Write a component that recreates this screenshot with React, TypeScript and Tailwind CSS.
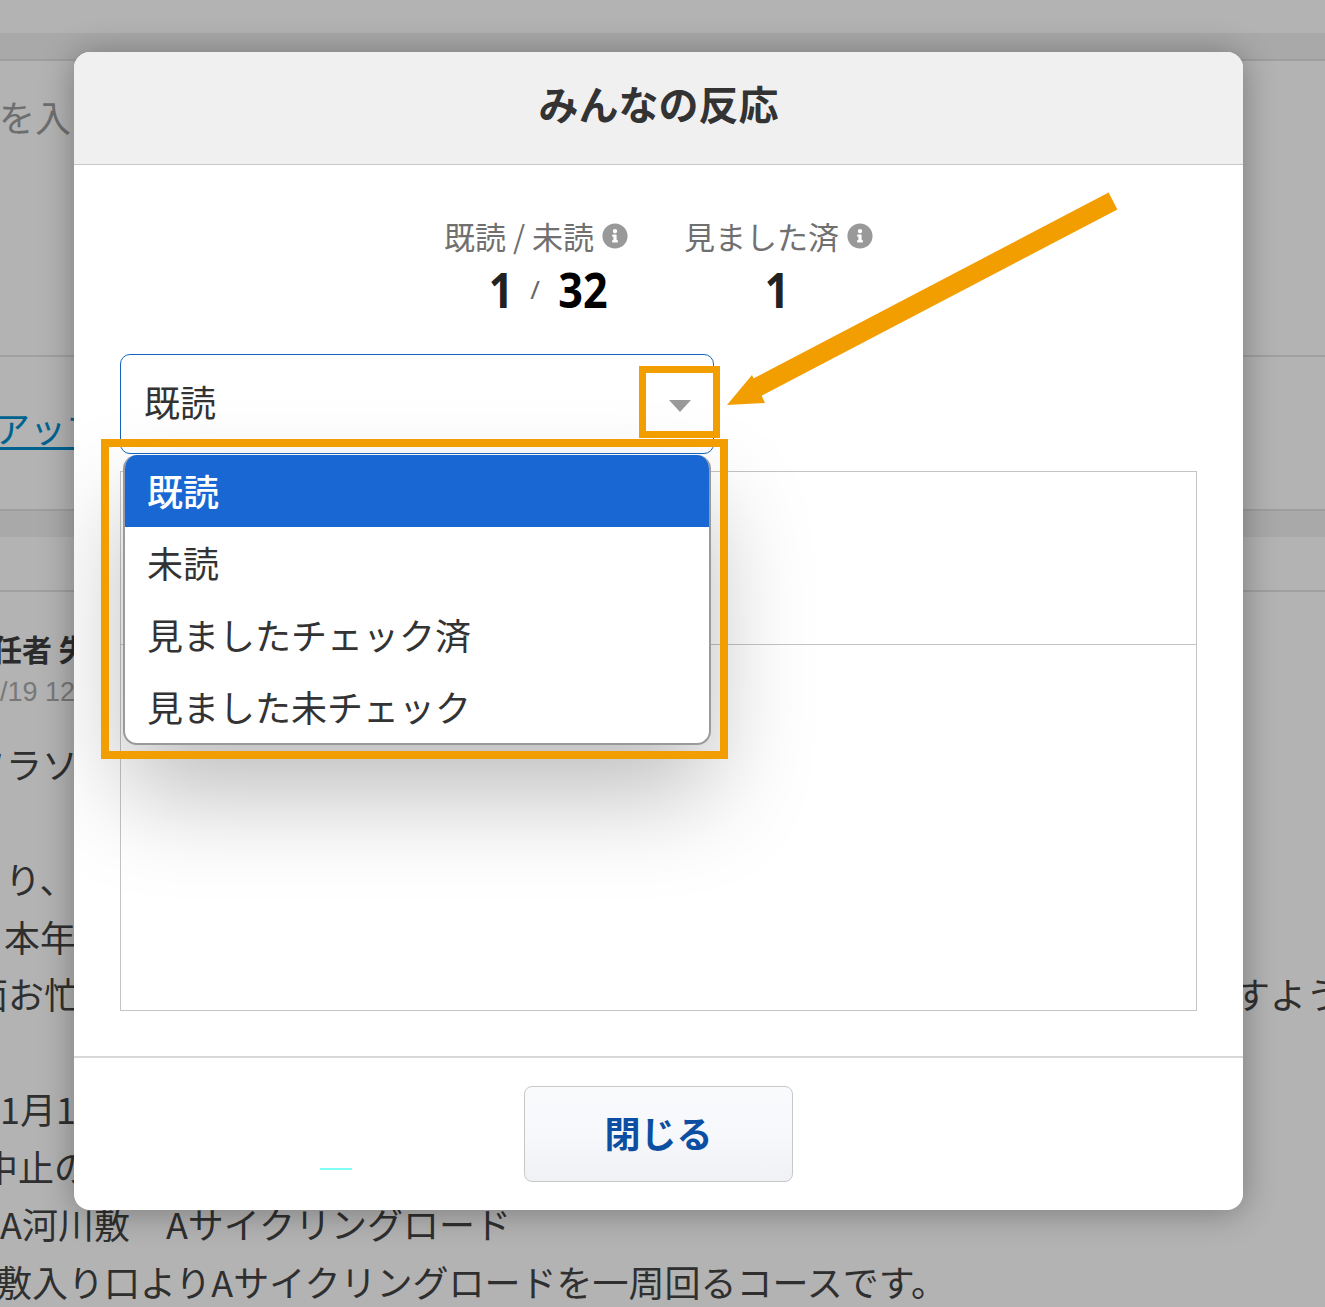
import { FaInfoCircle } from "react-icons/fa";

const items = ["未読", "見ましたチェック済", "見ました未チェック"];

function Background() {
  return (
    <div className="text-[36px] text-[#2f2f2f] whitespace-nowrap">
      <div className="h-[33px] bg-[#b3b3b3]" />
      <div className="h-[28px] bg-[#a9a9a9] border-b-2 border-[#9e9e9e]" />
      <div className="h-[294px] pt-[32px] -ml-[1px] leading-[46px] text-[#6e6e6e]">を入</div>
      <div className="h-[154px] border-t-2 border-[#a0a0a0] pt-[47px] leading-[46px]">
        <span className="-ml-[6px] inline-block text-[#00638f] underline underline-offset-4">アップ</span>
      </div>
      <div className="h-[28px] bg-[#a9a9a9] border-t-2 border-[#9e9e9e]" />
      <div className="h-[55px] border-b-2 border-[#a0a0a0] bg-[#b3b3b3]" />
      <div className="pt-[36px] -ml-[8px] leading-[40px] font-bold text-[30px] text-[#2b2b2b]">任者 失</div>
      <div className="pt-[8px] leading-[32px] text-[27px] text-[#787878] font-['Liberation_Sans',sans-serif]">/19 12:</div>
      <div className="pt-[27px] leading-[57.5px]">
        <div className="h-[57.5px] -ml-[30px]">フラソ</div>
        <div className="h-[57.5px]" />
        <div className="h-[57.5px] pl-[5px]">り、</div>
        <div className="h-[57.5px] pl-[4px]">本年</div>
        <div className="h-[57.5px] flex justify-between">
          <span className="-ml-[28px]">面お忙</span>
          <span className="-mr-[17px]">すよう</span>
        </div>
        <div className="h-[57.5px]" />
        <div className="h-[57.5px]">1月1</div>
        <div className="h-[57.5px] -ml-[18px]">中止の</div>
        <div className="h-[57.5px]">A河川敷　Aサイクリングロード</div>
        <div className="h-[57.5px] -ml-[4px]">敷入り口よりAサイクリングロードを一周回るコースです。</div>
      </div>
    </div>
  );
}

function Stat({ label, children }: { label: string; children: React.ReactNode }) {
  return (
    <div className="flex flex-col items-center">
      <div className="flex items-center gap-[8px] text-[31px] leading-[38px] text-[#707070]">
        {label}
        <FaInfoCircle className="w-[26px] h-[26px] text-[#999999]" />
      </div>
      <div className="mt-[11px] h-[46px] flex items-center text-[49px] font-bold leading-[46px] text-[#222222] font-['Noto_Sans',sans-serif]">
        {children}
      </div>
    </div>
  );
}

function Select() {
  return (
    <div className="relative w-[594px] h-[100px] mt-[42px] rounded-[10px] border border-[#1565c0] bg-white flex items-center justify-between pl-[23px] pr-[21px]">
      <span className="pb-[6px] text-[36px] text-[#333333]">既読</span>
      <svg width="24" height="14" viewBox="0 0 24 14" className="mt-[3px]">
        <path d="M1 1h22L12 13z" fill="#999999" />
      </svg>
      <div className="absolute left-[2px] top-[100px] w-[588px] h-[290px] rounded-[14px] border-2 border-t-0 border-[#9a9a9a] bg-white shadow-[0_50px_100px_rgba(0,0,0,0.26)] overflow-hidden text-[36px] text-[#333333]">
        <div className="h-[72px] bg-[#1967d2] pl-[22px] pb-[2px] flex items-center font-medium text-white">既読</div>
        {items.map((t) => (
          <div key={t} className="h-[72px] pl-[22px] pb-[2px] flex items-center">{t}</div>
        ))}
      </div>
    </div>
  );
}

function Modal() {
  return (
    <div className="absolute left-[74px] top-[52px] w-[1169px] h-[1158px] rounded-[16px] bg-white shadow-[0_2px_34px_rgba(0,0,0,0.32)] overflow-hidden flex flex-col">
      <div className="h-[113px] shrink-0 pb-[10px] bg-[#f0f0f0] border-b border-[#c8c8c8] flex items-center justify-center text-[40px] font-bold text-[#333333]">
        みんなの反応
      </div>
      <div className="flex-1 px-[46px] pt-[52px]">
        <div className="flex justify-center gap-[56px]">
          <Stat label="既読 / 未読">
            <div className="ml-[26px] flex items-center">
              <span className="scale-x-[0.88]">1</span>
              <span className="mx-[15px] text-[26px] font-normal text-[#666666]">/</span>
              <span className="scale-x-[0.88] text-black">32</span>
            </div>
          </Stat>
          <Stat label="見ました済">
            <span className="mr-[4px] scale-x-[0.88]">1</span>
          </Stat>
        </div>
        <Select />
        <div className="mt-[17px] h-[540px] border border-[#c4c4c4] flex flex-col">
          <div className="h-[173px] border-b border-[#c4c4c4]" />
        </div>
      </div>
      <div className="h-[154px] shrink-0 border-t-2 border-[#d8d8d8] flex justify-center pt-[28px]">
        <button className="w-[269px] h-[96px] pb-[4px] rounded-[8px] border border-[#c8c8c8] bg-gradient-to-b from-[#f9fafc] via-[#f6f8fb] to-[#eff1f4] text-[36px] font-semibold text-[#0b4ea2]">
          閉じる
        </button>
      </div>
      <div className="absolute left-[246px] top-[1116px] w-[32px] h-[2px] bg-[#7ffff5]" />
    </div>
  );
}

function Annotations() {
  return (
    <>
      <div className="absolute left-[639px] top-[366px] w-[81px] h-[72px] border-[7px] border-[#f39e00]" />
      <div className="absolute left-[101px] top-[439px] w-[627px] h-[320px] border-[8px] border-[#f39e00]" />
      <svg width="1325" height="1307" className="absolute left-0 top-0 pointer-events-none">
        <path d="M1113 201L752 390" stroke="#f39e00" strokeWidth="19" fill="none" />
        <path d="M727 405L752 375L765 403z" fill="#f39e00" />
      </svg>
    </>
  );
}

export default function App() {
  return (
    <div className="relative w-full h-[1307px] overflow-hidden bg-[#b3b3b3] font-['Noto_Sans_CJK_JP','Noto_Sans',sans-serif]">
      <Background />
      <Modal />
      <Annotations />
    </div>
  );
}
